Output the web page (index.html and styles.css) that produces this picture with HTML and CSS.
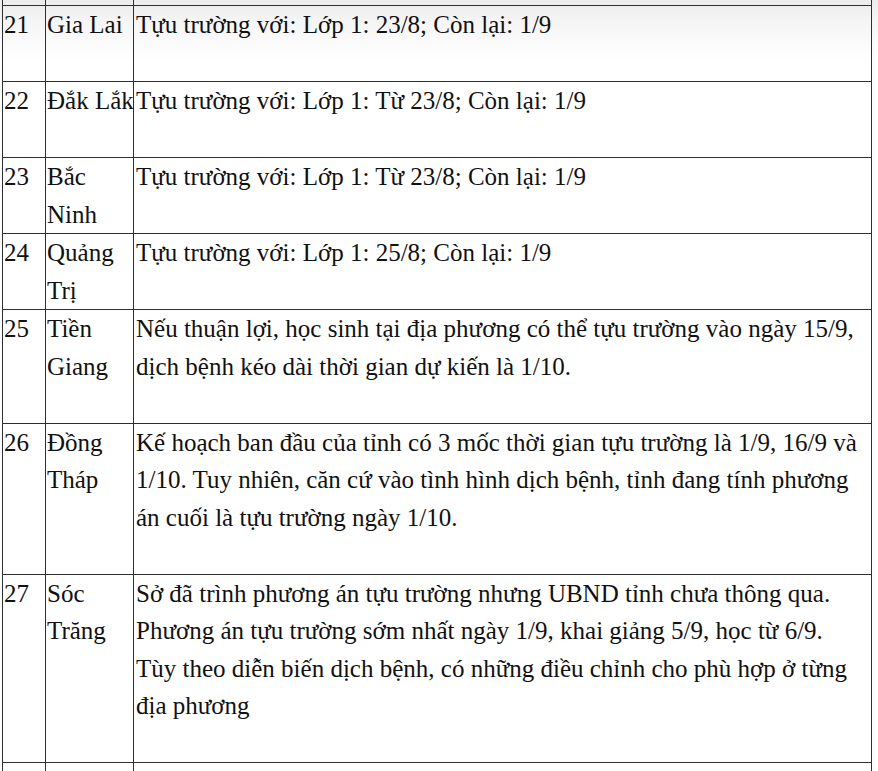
FILE: index.html
```html
<!DOCTYPE html>
<html lang="vi">
<head>
<meta charset="utf-8">
<title>Lịch tựu trường</title>
<link rel="stylesheet" href="styles.css">
</head>
<body>
<div class="page">
<table class="schedule">
<colgroup>
<col class="c-no">
<col class="c-name">
<col class="c-info">
</colgroup>
<tbody>
<tr class="prev"><td></td><td></td><td></td></tr>
<tr><td>21</td><td>Gia Lai</td><td class="info">Tựu trường với: Lớp 1: 23/8; Còn lại: 1/9</td></tr>
<tr><td>22</td><td class="nowrap">Đắk Lắk</td><td class="info">Tựu trường với: Lớp 1: Từ 23/8; Còn lại: 1/9</td></tr>
<tr><td>23</td><td>Bắc Ninh</td><td class="info">Tựu trường với: Lớp 1: Từ 23/8; Còn lại: 1/9</td></tr>
<tr><td>24</td><td>Quảng Trị</td><td class="info">Tựu trường với: Lớp 1: 25/8; Còn lại: 1/9</td></tr>
<tr><td>25</td><td>Tiền Giang</td><td class="info">Nếu thuận lợi, học sinh tại địa phương có thể tựu trường vào ngày 15/9, dịch bệnh kéo dài thời gian dự kiến là 1/10.</td></tr>
<tr><td>26</td><td>Đồng Tháp</td><td class="info">Kế hoạch ban đầu của tỉnh có 3 mốc thời gian tựu trường là 1/9, 16/9 và 1/10. Tuy nhiên, căn cứ vào tình hình dịch bệnh, tỉnh đang tính phương án cuối là tựu trường ngày 1/10.</td></tr>
<tr><td>27</td><td>Sóc Trăng</td><td class="info">Sở đã trình phương án tựu trường nhưng UBND tỉnh chưa thông qua. Phương án tựu trường sớm nhất ngày 1/9, khai giảng 5/9, học từ 6/9.<br>Tùy theo diễn biến dịch bệnh, có những điều chỉnh cho phù hợp ở từng địa phương</td></tr>
<tr><td>28</td><td>Hậu Giang</td><td class="info">Nếu tình hình dịch bệnh được kiểm soát, học sinh sẽ tựu trường vào ngày 1/9.</td></tr>
</tbody>
</table>
</div>
</body>
</html>
```

FILE: styles.css
```css
html, body {
  margin: 0;
  padding: 0;
}
body {
  background: linear-gradient(#ececec 0px, #f6f6f6 25px, #ffffff 60px) no-repeat;
  background-color: #fff;
  font-family: "Liberation Serif", "Times New Roman", Times, serif;
  color: #111;
  overflow: hidden;
  height: 771px;
}
.page {
  padding-left: 2px;
}
.schedule {
  border-collapse: collapse;
  table-layout: fixed;
  width: 870px;
  font-size: 25px;
  line-height: 37.5px;
}
.c-no { width: 43px; }
.c-name { width: 88px; }
.schedule td {
  border: 1px solid #2e2e2e;
  padding: 0 0 0 1px;
  vertical-align: top;
}
.schedule td.nowrap {
  white-space: nowrap;
}
.schedule td.info {
  padding-left: 2px;
  padding-bottom: 37.5px;
}
.schedule tr.prev td {
  height: 5px;
  border-top: none;
  padding: 0;
}
```
